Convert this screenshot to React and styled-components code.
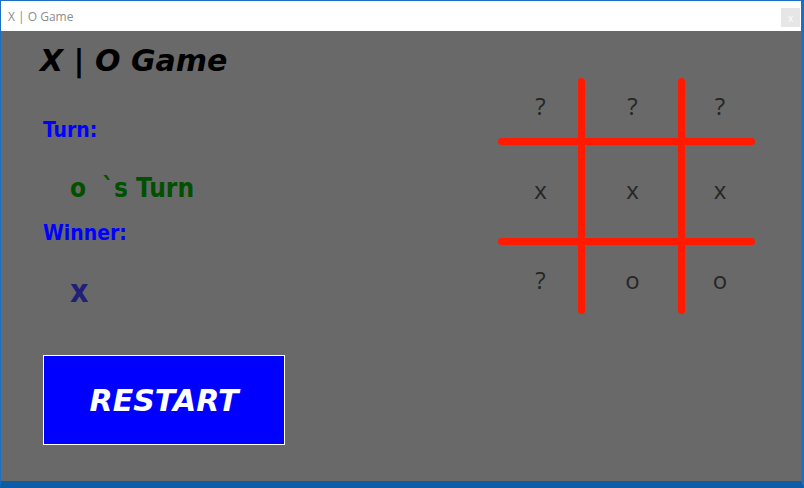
import React from "react";
import styled, { createGlobalStyle } from "styled-components";

const GlobalStyle = createGlobalStyle`
  html, body {
    margin: 0;
    padding: 0;
    background: #0b5da8;
  }
`;

const Window = styled.div`
  box-sizing: border-box;
  width: 804px;
  height: 488px;
  display: flex;
  flex-direction: column;
  border: 1px solid #1c6fc4;
  border-right-width: 3px;
  border-bottom: 7px solid #0b5da8;
  overflow: hidden;
`;

const TitleBar = styled.div`
  height: 30px;
  flex: none;
  background: #ffffff;
  display: flex;
  align-items: center;
  justify-content: space-between;
  padding-left: 7px;
  font-family: "Open Sans", "Noto Sans", sans-serif;
  font-size: 12px;
  color: #8c8c8c;
`;

const CloseBox = styled.div`
  width: 19px;
  height: 19px;
  margin: 3px 1px 0 0;
  background: #e6e6e6;
  color: #ffffff;
  font-size: 10px;
  display: flex;
  align-items: center;
  justify-content: center;
`;

const Body = styled.div`
  flex: 1;
  background: #696969;
  display: flex;
  align-items: flex-start;
`;

const LeftPanel = styled.div`
  width: 497px;
  box-sizing: border-box;
  padding-left: 42px;
  display: flex;
  flex-direction: column;
  align-items: flex-start;
`;

const GameTitle = styled.h1`
  margin: 12px 0 0 -3px;
  font-family: "DejaVu Sans", Verdana, sans-serif;
  font-weight: bold;
  font-style: italic;
  font-size: 30px;
  line-height: 36px;
  color: #000000;
`;

const Label = styled.div`
  margin-top: ${(p) => p.$gap}px;
  font-family: "DejaVu Sans Condensed", "DejaVu Sans", sans-serif;
  font-stretch: condensed;
  font-weight: bold;
  font-size: 21px;
  line-height: 24px;
  color: #0000ff;
`;

const TurnText = styled.div`
  margin: 31px 0 0 27px;
  font-family: "DejaVu Sans Condensed", "DejaVu Sans", sans-serif;
  font-stretch: condensed;
  font-weight: bold;
  font-size: 26px;
  line-height: 30px;
  color: #005000;
  white-space: pre;
`;

const WinnerText = styled.div`
  margin: 28px 0 0 27px;
  font-family: "DejaVu Sans Condensed", "DejaVu Sans", sans-serif;
  font-weight: bold;
  font-size: 32px;
  line-height: 36px;
  color: #202078;
`;

const RestartButton = styled.button`
  margin-top: 46px;
  width: 242px;
  height: 90px;
  box-sizing: border-box;
  border: 1px solid #ffffff;
  background: #0000ff;
  color: #ffffff;
  font-family: "DejaVu Sans", Verdana, sans-serif;
  font-weight: bold;
  font-style: italic;
  font-size: 30px;
  padding: 0;
  cursor: pointer;
`;

const Board = styled.div`
  margin-top: 47px;
  display: grid;
  grid-template-columns: 80px 7px 93px 7px 70px;
  grid-template-rows: 60px 7px 93px 7px 69px;
`;

const Line = styled.div`
  background: #ff1a00;
  border-radius: 4px;
  grid-row: ${(p) => (p.$vertical ? "1 / -1" : p.$at)};
  grid-column: ${(p) => (p.$vertical ? p.$at : "1 / -1")};
`;

const Cell = styled.div`
  grid-row: ${(p) => p.$row};
  grid-column: ${(p) => p.$col};
  display: flex;
  align-items: center;
  justify-content: center;
  padding: 0 0 ${(p) => p.$lift}px ${(p) => p.$indent}px;
  font-family: "Open Sans", "Noto Sans", sans-serif;
  font-size: 24px;
  color: #262626;
`;

const cells = [
  ["?", "?", "?"],
  ["x", "x", "x"],
  ["?", "o", "o"],
];

const App = () => {
  return (
    <Window>
      <GlobalStyle />
      <TitleBar>
        <span>X | O Game</span>
        <CloseBox>x</CloseBox>
      </TitleBar>
      <Body>
        <LeftPanel>
          <GameTitle>X | O Game</GameTitle>
          <Label $gap={39}>Turn:</Label>
          <TurnText>{"o  `s Turn"}</TurnText>
          <Label $gap={18}>Winner:</Label>
          <WinnerText>x</WinnerText>
          <RestartButton>RESTART</RestartButton>
        </LeftPanel>
        <Board>
          <Line $vertical $at={2} />
          <Line $vertical $at={4} />
          <Line $at={2} />
          <Line $at={4} />
          {cells.map((row, r) =>
            row.map((mark, c) => (
              <Cell
                key={r + "-" + c}
                $row={r * 2 + 1}
                $col={c * 2 + 1}
                $lift={r < 2 ? 5 : 0}
                $indent={c === 0 ? 5 : c === 1 ? 2 : 0}
              >
                {mark}
              </Cell>
            ))
          )}
        </Board>
      </Body>
    </Window>
  );
};

export default App;
